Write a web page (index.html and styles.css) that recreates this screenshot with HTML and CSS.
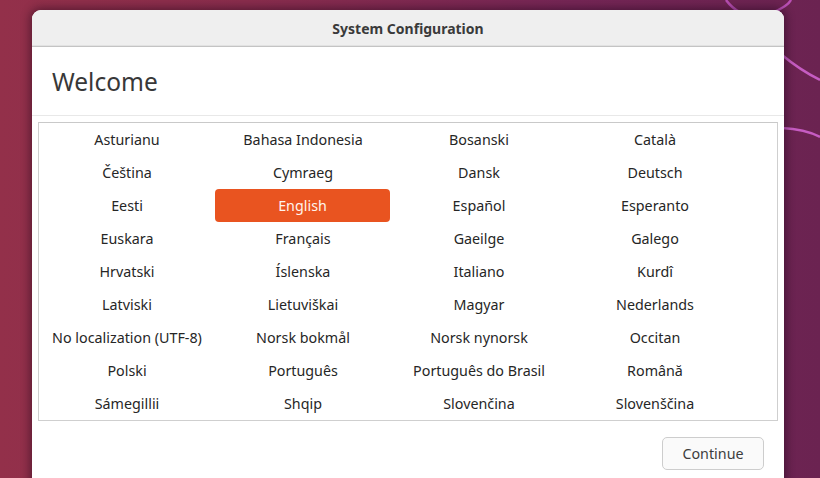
FILE: index.html
```html
<!DOCTYPE html>
<html>
<head>
<meta charset="utf-8">
<link rel="stylesheet" href="styles.css">
</head>
<body>
<svg class="wallpaper" width="820" height="478" viewBox="0 0 820 478">
  <path d="M726 0 Q 742 22 772 13 Q 788 6 791 0" fill="none" stroke="#b94fb4" stroke-width="2.5"/>
  <path d="M782 55 Q 800 70 820 80" fill="none" stroke="#c65cc2" stroke-width="2.5"/>
  <path d="M782 128 Q 805 129 820 137" fill="none" stroke="#c65cc2" stroke-width="2.5"/>
</svg>
<div class="dialog">
  <div class="titlebar">System Configuration</div>
  <div class="header">Welcome</div>
  <div class="content">
    <div class="langs">
      <div class="lang">Asturianu</div>
      <div class="lang">Bahasa Indonesia</div>
      <div class="lang">Bosanski</div>
      <div class="lang">Català</div>
      <div class="lang">Čeština</div>
      <div class="lang">Cymraeg</div>
      <div class="lang">Dansk</div>
      <div class="lang">Deutsch</div>
      <div class="lang">Eesti</div>
      <div class="lang selected">English</div>
      <div class="lang">Español</div>
      <div class="lang">Esperanto</div>
      <div class="lang">Euskara</div>
      <div class="lang">Français</div>
      <div class="lang">Gaeilge</div>
      <div class="lang">Galego</div>
      <div class="lang">Hrvatski</div>
      <div class="lang">Íslenska</div>
      <div class="lang">Italiano</div>
      <div class="lang">Kurdî</div>
      <div class="lang">Latviski</div>
      <div class="lang">Lietuviškai</div>
      <div class="lang">Magyar</div>
      <div class="lang">Nederlands</div>
      <div class="lang">No localization (UTF-8)</div>
      <div class="lang">Norsk bokmål</div>
      <div class="lang">Norsk nynorsk</div>
      <div class="lang">Occitan</div>
      <div class="lang">Polski</div>
      <div class="lang">Português</div>
      <div class="lang">Português do Brasil</div>
      <div class="lang">Română</div>
      <div class="lang">Sámegillii</div>
      <div class="lang">Shqip</div>
      <div class="lang">Slovenčina</div>
      <div class="lang">Slovenščina</div>
    </div>
    <div class="actions">
      <button class="btn">Continue</button>
    </div>
  </div>
</div>
</body>
</html>
```
FILE: styles.css
```css
html, body {
  margin: 0;
  padding: 0;
  width: 820px;
  height: 478px;
  overflow: hidden;
}
body {
  position: relative;
  background: linear-gradient(90deg, #93304a 0%, #8a2d4d 30%, #762656 70%, #6b2351 100%);
  font-family: "Noto Sans", "DejaVu Sans", sans-serif;
}
.wallpaper {
  position: absolute;
  left: 0;
  top: 0;
}
.dialog {
  position: relative;
  margin: 10px 0 0 32px;
  width: 752px;
  height: 480px;
  background: #ffffff;
  border-radius: 9px 9px 0 0;
  box-shadow: 0 0 10px 2px rgba(20, 0, 20, 0.45);
  display: flex;
  flex-direction: column;
  overflow: hidden;
}
.titlebar {
  height: 36px;
  background: #efefef;
  border-bottom: 1px solid #c4c4c4;
  box-shadow: inset 0 -4px 0 -3px #e2e2e2;
  display: flex;
  align-items: center;
  justify-content: center;
  font-weight: 700;
  font-size: 14px;
  color: #3a3a3a;
}
.header {
  height: 68px;
  border-bottom: 1px solid #e8e8e8;
  display: flex;
  align-items: center;
  padding-left: 20px;
  font-size: 24.5px;
  color: #383838;
}
.content {
  padding: 6px 6px 0 6px;
  display: flex;
  flex-direction: column;
}
.langs {
  height: 297px;
  border: 1px solid #cfcfcf;
  border-top-color: #c9c9c9;
  display: grid;
  grid-template-columns: repeat(4, 176px);
  grid-auto-rows: 33px;
  align-content: start;
}
.lang {
  display: flex;
  align-items: center;
  justify-content: center;
  font-size: 14.3px;
  color: #262626;
  white-space: nowrap;
}
.lang.selected {
  background: #e95420;
  color: #fff4ee;
  border-radius: 4px;
  margin-right: 1px;
}
.actions {
  display: flex;
  justify-content: flex-end;
  padding: 16px 14px 0 0;
}
.btn {
  width: 102px;
  height: 33px;
  border: 1px solid #cdcdcd;
  border-radius: 5px;
  background: #fafafa;
  font-family: "Noto Sans", "DejaVu Sans", sans-serif;
  font-size: 14.3px;
  color: #3d3d3d;
  padding: 0;
}
```
